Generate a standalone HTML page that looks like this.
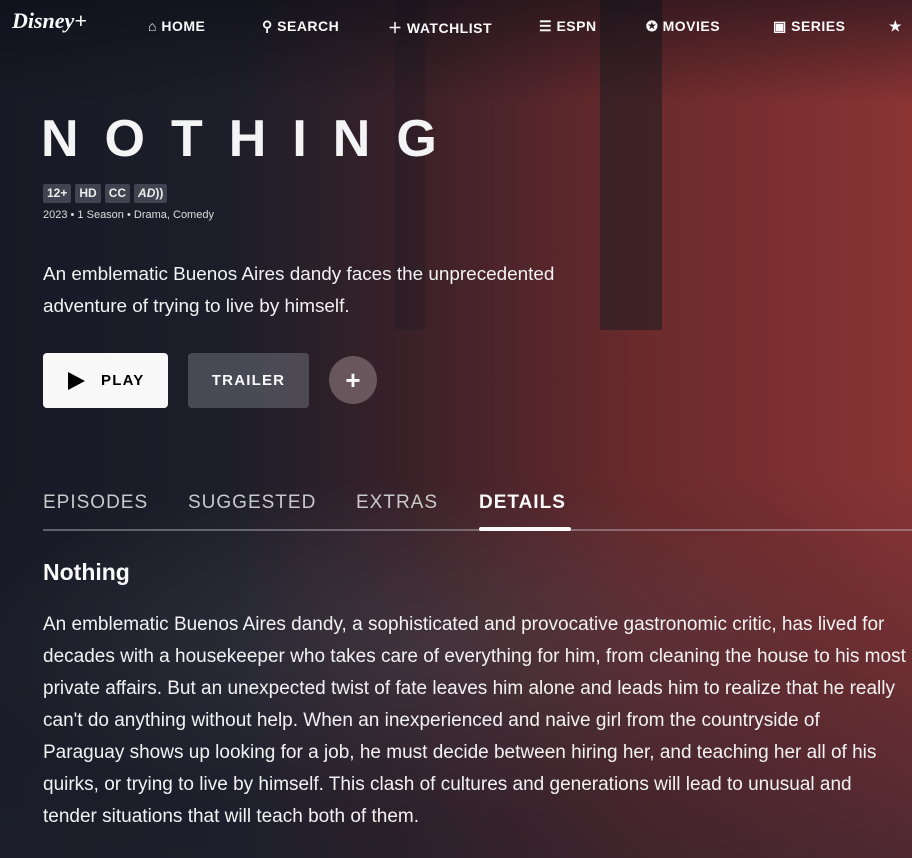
<!DOCTYPE html>
<html><head><meta charset="utf-8"><style>
*{margin:0;padding:0;box-sizing:border-box}
body{width:912px;height:858px;overflow:hidden;font-family:"Liberation Sans",sans-serif;color:#f9f9f9;position:relative;background:#1a1d29}
.bg{position:absolute;inset:0;background:linear-gradient(90deg,#171a26 0%,#1c1e2a 25%,#3a2128 45%,#6a2a2c 70%,#8a3434 100%)}
.bg2{position:absolute;inset:0;background:linear-gradient(180deg,rgba(10,12,20,.55) 0%,rgba(0,0,0,0) 12%,rgba(0,0,0,0) 55%,rgba(30,32,45,.55) 100%)}
.street{position:absolute;left:0;top:480px;width:912px;height:378px;background:radial-gradient(ellipse 50% 45% at 45% 45%,rgba(140,140,150,.22),rgba(0,0,0,0) 100%)}
.win{position:absolute;background:#221c22;opacity:.6}
.nav{position:absolute;top:0;left:0;right:0;height:60px}
.nav span{position:absolute;top:18px;font-weight:bold;font-size:14px;letter-spacing:.5px;color:#f9f9f9}
.logo{position:absolute;left:12px;top:8px;font-family:"Liberation Serif",serif;font-style:italic;font-size:22px;font-weight:bold}
h1{position:absolute;left:41px;top:109px;font-size:52px;font-weight:bold;letter-spacing:26px;color:#f4f4f4}
.badges{position:absolute;left:43px;top:184px;display:flex;gap:4px}
.badges b{background:rgba(80,80,95,.75);font-size:12px;height:19px;line-height:19px;padding:0 4px;border-radius:2px;color:#eee}
.meta{position:absolute;left:43px;top:209px;font-size:11px;color:#ddd}
.desc{position:absolute;left:43px;top:259px;font-size:18.9px;line-height:32px;color:#f2f2f2;white-space:nowrap}
.play{position:absolute;left:43px;top:353px;width:125px;height:55px;background:#f9f9f9;border-radius:4px;color:#000;font-weight:bold;font-size:15px;letter-spacing:1.2px}
.trailer{position:absolute;left:188px;top:353px;width:121px;height:55px;background:rgba(110,110,120,.55);border-radius:4px;font-weight:bold;font-size:15px;letter-spacing:1.2px;text-align:center;line-height:55px}
.plus{position:absolute;left:329px;top:356px;width:48px;height:48px;border-radius:50%;background:rgba(130,110,115,.7);text-align:center;line-height:48px;font-size:26px;font-weight:bold}
.tabs span{position:absolute;top:492px;font-size:19px;letter-spacing:1px;color:#c9c9cc}
.line{position:absolute;left:43px;right:0;top:529px;height:2px;background:rgba(200,200,210,.4)}
.ul{position:absolute;left:479px;top:527px;width:92px;height:4px;background:#f9f9f9;border-radius:2px}
h2{position:absolute;left:43px;top:559px;font-size:23px;font-weight:bold}
.p{position:absolute;left:43px;top:609px;font-size:19px;line-height:32px;white-space:nowrap;color:#f2f2f2}
</style></head><body>
<div class="bg"></div>
<div class="win" style="left:395px;top:0;width:30px;height:330px;opacity:.4"></div>
<div class="win" style="left:600px;top:0;width:62px;height:330px"></div>
<div class="street"></div>
<div class="bg2"></div>
<div class="nav">
<div class="logo">Disney+</div>
<span style="left:148px">⌂ HOME</span>
<span style="left:262px">⚲ SEARCH</span>
<span style="left:388px">＋ WATCHLIST</span>
<span style="left:539px">☰ ESPN</span>
<span style="left:646px">✪ MOVIES</span>
<span style="left:773px">▣ SERIES</span>
<span style="left:889px">★</span>
</div>
<h1>NOTHING</h1>
<div class="badges"><b>12+</b><b>HD</b><b>CC</b><b><i>AD</i>))</b></div>
<div class="meta">2023 • 1 Season • Drama, Comedy</div>
<div class="desc">An emblematic Buenos Aires dandy faces the unprecedented<br>adventure of trying to live by himself.</div>
<div class="play"><svg style="position:absolute;left:24px;top:19px" width="18" height="18" viewBox="0 0 18 18"><path d="M1 0L18 9L1 18Z" fill="#000"/></svg><span style="position:absolute;left:58px;top:19px">PLAY</span></div>
<div class="trailer">TRAILER</div>
<div class="plus">+</div>
<div class="tabs"><span style="left:43px">EPISODES</span><span style="left:188px">SUGGESTED</span><span style="left:356px">EXTRAS</span><span style="left:479px;color:#f9f9f9;font-weight:bold">DETAILS</span></div>
<div class="line"></div><div class="ul"></div>
<h2>Nothing</h2>
<div class="p">An emblematic Buenos Aires dandy, a sophisticated and provocative gastronomic critic, has lived for<br>decades with a housekeeper who takes care of everything for him, from cleaning the house to his most<br>private affairs. But an unexpected twist of fate leaves him alone and leads him to realize that he really<br>can't do anything without help. When an inexperienced and naive girl from the countryside of<br>Paraguay shows up looking for a job, he must decide between hiring her, and teaching her all of his<br>quirks, or trying to live by himself. This clash of cultures and generations will lead to unusual and<br>tender situations that will teach both of them.</div>
</body></html>
